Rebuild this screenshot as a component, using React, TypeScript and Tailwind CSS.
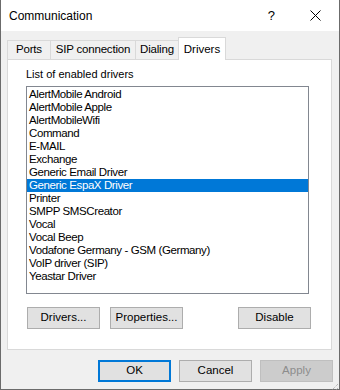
import React from 'react';

const drivers = [
  'AlertMobile Android',
  'AlertMobile Apple',
  'AlertMobileWifi',
  'Command',
  'E-MAIL',
  'Exchange',
  'Generic Email Driver',
  'Generic EspaX Driver',
  'Printer',
  'SMPP SMSCreator',
  'Vocal',
  'Vocal Beep',
  'Vodafone Germany - GSM (Germany)',
  'VoIP driver (SIP)',
  'Yeastar Driver',
];

const selected = 'Generic EspaX Driver';

const tabs = [
  { name: 'Ports', w: 'w-[43px]' },
  { name: 'SIP connection', w: 'w-[85px]' },
  { name: 'Dialing', w: 'w-[43px]' },
];

const btn =
  'h-[22px] w-[73px] border border-[#adadad] bg-[#e1e1e1] text-[11.5px] text-black flex items-center justify-center';

export default function App() {
  return (
    <div
      className="w-[340px] h-[390px] bg-[#f0f0f0] border-l border-r border-b border-[#6b6b6b] flex flex-col text-black"
      style={{ fontFamily: '"Liberation Sans", Arial, sans-serif' }}
    >
      {/* title bar */}
      <div className="h-[31px] bg-white flex items-center shrink-0">
        <span className="ml-[8px] text-[12px]">Communication</span>
        <span className="ml-auto mr-[35px] text-[13px] leading-none">?</span>
        <svg width="11" height="11" viewBox="0 0 11 11" className="mr-[18px]">
          <path d="M0.5 0.5L10.5 10.5M10.5 0.5L0.5 10.5" stroke="#000" strokeWidth="1" />
        </svg>
      </div>

      <div className="pl-[6px] pr-[7px] pt-[6px] flex flex-col">
        {/* tabs */}
        <div className="flex items-end h-[22px]">
          {tabs.map((t) => (
            <div
              key={t.name}
              className={`${t.w} h-[19px] border-t border-l border-[#d9d9d9] last:border-r flex items-center justify-center text-[11.5px] tracking-[-0.2px] bg-[#f0f0f0]`}
            >
              {t.name}
            </div>
          ))}
          <div className="w-[48px] h-[23px] -mb-[1px] bg-white border-t border-l border-r border-[#d9d9d9] flex items-start justify-center pt-[3px] text-[11.5px] relative z-10">
            Drivers
          </div>
        </div>

        {/* panel */}
        <div className="h-[291px] bg-white border border-[#d9d9d9] pl-[18px] pr-[22px] flex flex-col">
          <div className="mt-[8px] h-[13px] leading-[13px] text-[11px]">List of enabled drivers</div>
          <div className="mt-[5px] h-[208px] border border-[#828790] pt-[1px] flex flex-col">
            {drivers.map((d) => (
              <div
                key={d}
                className={`h-[13px] leading-[13px] pl-[2px] text-[11.5px] tracking-[-0.4px] whitespace-nowrap ${
                  d === selected ? 'bg-[#0078d7] text-white' : ''
                }`}
              >
                {d}
              </div>
            ))}
          </div>
          <div className="mt-[13px] flex ml-[1px]">
            <div className={btn}>Drivers...</div>
            <div className={`${btn} ml-[10px]`}>Properties...</div>
            <div className={`${btn} ml-auto -mr-[2px]`}>Disable</div>
          </div>
        </div>

        {/* dialog buttons */}
        <div className="mt-[10px] flex justify-end gap-[8px] -mr-[1px]">
          <div className="h-[22px] w-[73px] border-2 border-[#0078d7] bg-[#e1e1e1] text-[11.5px] flex items-center justify-center">
            OK
          </div>
          <div className={btn}>Cancel</div>
          <div className="h-[22px] w-[73px] border border-[#bfbfbf] bg-[#cccccc] text-[11.5px] text-[#8c8c8c] flex items-center justify-center">
            Apply
          </div>
        </div>
      </div>

      {/* resize grip */}
      <div className="mt-auto flex justify-end">
        <svg width="12" height="12" viewBox="0 0 12 12">
          <path d="M11 2L2 11M11 6L6 11M11 10L10 11" stroke="#a0a0a0" strokeWidth="1" strokeDasharray="1 1" />
        </svg>
      </div>
    </div>
  );
}
